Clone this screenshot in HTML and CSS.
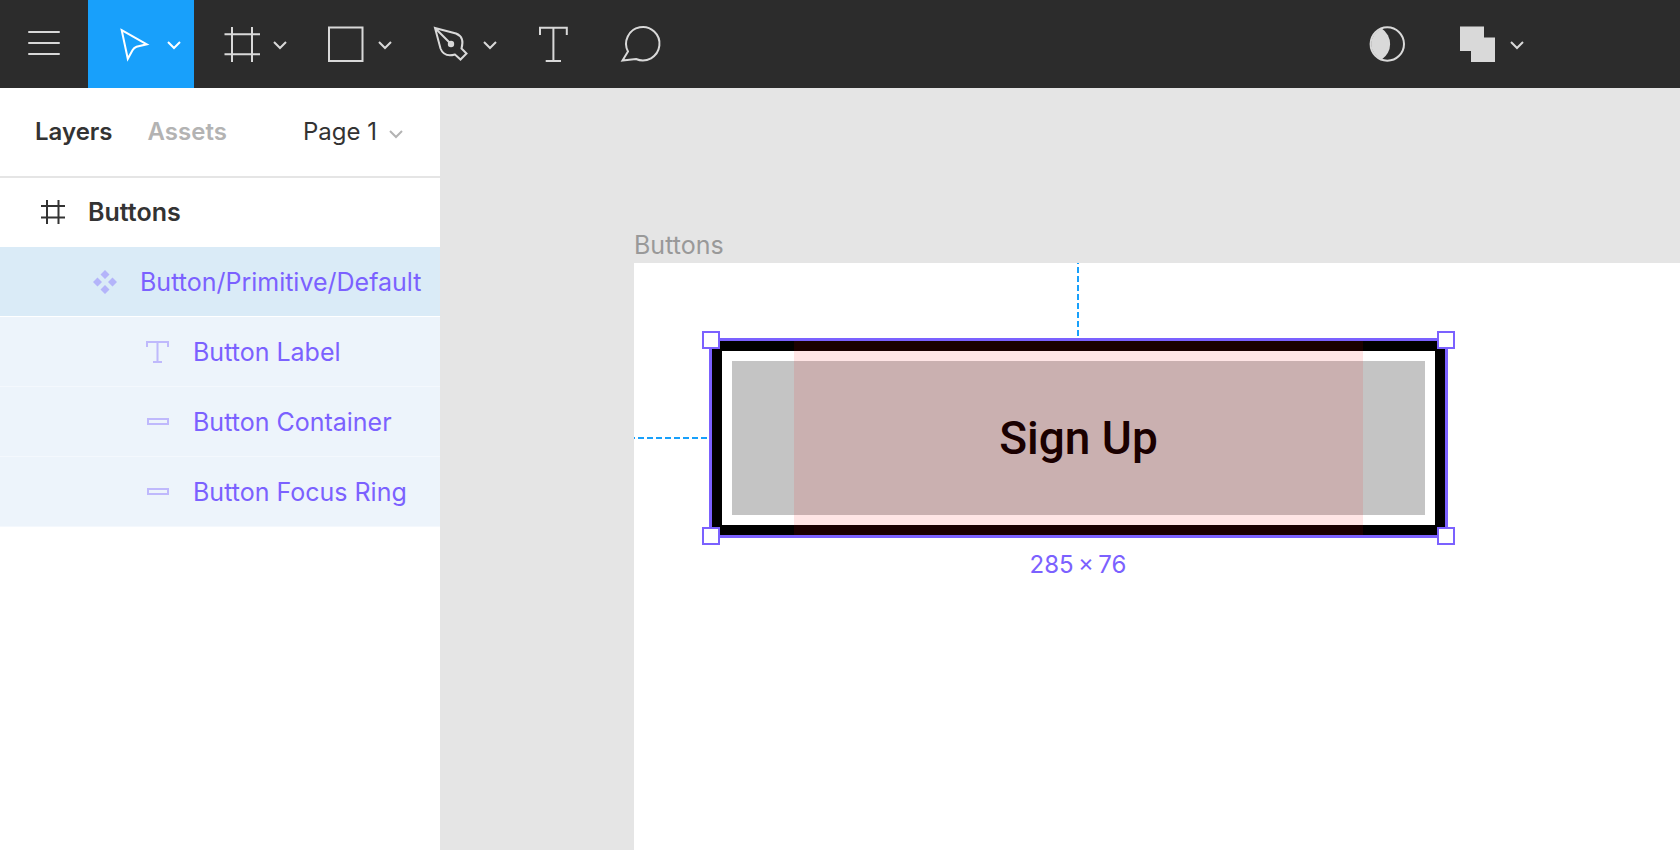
FILE: index.html
```html
<!DOCTYPE html>
<html lang="en">
<head>
    <meta charset="UTF-8">
    <meta name="viewport" content="width=device-width, initial-scale=1.0">
    <title>Buttons</title>
    <link rel="stylesheet" href="styles.css">
</head>
<body>

    <!-- Shared chevron -->
    <svg class="sprite" aria-hidden="true">
        <symbol id="chevron" viewBox="0 0 16 16">
            <path d="M2 6l6 6 6-6"/>
        </symbol>
    </svg>

    <!-- Toolbar -->
    <header class="toolbar">
        <button class="tool" aria-label="Menu">
            <svg class="icon" viewBox="0 0 36 36"><path stroke-linecap="round" d="M3 6h30M3 17h30M3 28h30"/></svg>
        </button>
        <button class="tool tool-menu active" aria-label="Move">
            <svg class="icon" viewBox="0 0 36 36"><path d="M4.7 4.2L29.8 18.3L19.5 20.8C17.5 21.5 16.500 22.500 15.500 24.300L10.8 32.8Z"/></svg>
            <svg class="chevron"><use href="#chevron"/></svg>
        </button>
        <button class="tool tool-menu" aria-label="Frame">
            <svg class="icon" viewBox="0 0 36 36"><path d="M9 1v35M29 1v35M1.5 8.300h35.500M1.5 28.200h35.500"/></svg>
            <svg class="chevron"><use href="#chevron"/></svg>
        </button>
        <button class="tool tool-menu" aria-label="Rectangle">
            <svg class="icon" viewBox="0 0 36 36"><path d="M1 1.5h33.500v33.500H1z"/></svg>
            <svg class="chevron"><use href="#chevron"/></svg>
        </button>
        <button class="tool tool-menu" aria-label="Pen">
            <svg class="icon" viewBox="0 0 36 36">
                <path d="M2 2L23 7.500C28 9.500 31 14 28.500 22.500L33.500 27.500L27.500 33.500L22 28.500C15 30.500 10 29 7.500 22.500ZM2 2l16 16"/>
                <circle class="solid" cx="18" cy="18" r="3.200"/>
            </svg>
            <svg class="chevron"><use href="#chevron"/></svg>
        </button>
        <button class="tool" aria-label="Text">
            <svg class="icon" viewBox="0 0 36 36"><path d="M5 9V1.800h26.800V9M18.400 1.800V35M10.700 35h15.300"/></svg>
        </button>
        <button class="tool" aria-label="Comment">
            <svg class="icon" viewBox="0 0 36 36"><path d="M5 25.500A16.700 16.700 0 1 1 13 33L-.5 34.600Z"/></svg>
        </button>

        <div class="toolbar-right">
            <button class="tool" aria-label="Mask">
                <svg class="icon" viewBox="0 0 36 36">
                    <circle cx="18.300" cy="18" r="16.700"/>
                    <path class="solid" d="M12.700 2.500A18.500 18.500 0 0 1 12.700 33.500A16.700 16.700 0 0 1 12.700 2.500Z"/>
                </svg>
            </button>
            <button class="tool tool-menu" aria-label="Union selection">
                <svg class="icon" viewBox="0 0 36 36"><path class="solid" d="M0 .5h24v11h11v24.500H11V25H0z"/></svg>
                <svg class="chevron"><use href="#chevron"/></svg>
            </button>
        </div>
    </header>

    <div class="workspace">
        <!-- Layers panel -->
        <aside class="panel">
            <div class="panel-header">
                <button class="tab selected">Layers</button>
                <button class="tab">Assets</button>
                <div class="page-picker">
                    <select aria-label="Page">
                        <option>Page 1</option>
                    </select>
                    <svg class="chevron"><use href="#chevron"/></svg>
                </div>
            </div>

            <ul class="layers">
                <li>
                    <button class="layer layer-frame">
                        <svg class="layer-icon" viewBox="0 0 26 26"><path d="M7 1v24M18.500 1v24M1 7h24M1 18.500h24"/></svg>
                        Buttons
                    </button>
                </li>
                <li>
                    <button class="layer component selected">
                        <svg class="layer-icon" viewBox="0 0 26 26"><path class="solid" d="M13 1l4.500 4.500L13 10 8.500 5.500zM13 16l4.500 4.500L13 25l-4.500-4.500zM5.500 8.500L10 13l-4.500 4.500L1 13zM20.500 8.500L25 13l-4.500 4.500L16 13z"/></svg>
                        Button/Primitive/Default
                    </button>
                </li>
                <li>
                    <button class="layer component child">
                        <svg class="layer-icon" viewBox="0 0 26 26"><path d="M2 8V3h21v5M12.500 3v20M8 23h9"/></svg>
                        Button Label
                    </button>
                </li>
                <li>
                    <button class="layer component child">
                        <svg class="layer-icon" viewBox="0 0 26 26"><path d="M3 10h20v5H3z"/></svg>
                        Button Container
                    </button>
                </li>
                <li>
                    <button class="layer component child">
                        <svg class="layer-icon" viewBox="0 0 26 26"><path d="M3 10h20v5H3z"/></svg>
                        Button Focus Ring
                    </button>
                </li>
            </ul>
        </aside>

        <!-- Canvas -->
        <main class="canvas">
            <div class="frame-name">Buttons</div>
            <div class="frame">
                <div class="selection">
                    <button class="sign-up"><span>Sign Up</span></button>
                    <i class="guide guide-top"></i>
                    <i class="guide guide-left"></i>
                    <i class="handle top left"></i>
                    <i class="handle top right"></i>
                    <i class="handle bottom left"></i>
                    <i class="handle bottom right"></i>
                </div>
                <div class="size">285&thinsp;×&thinsp;76</div>
            </div>
        </main>
    </div>

</body>
</html>
```

FILE: styles.css
```css
* {
    box-sizing: border-box;
}

body {
    margin: 0;
    font-family: Inter, sans-serif;
    font-size: 24px;
    line-height: 32px;
    color: #333;
    display: flex;
    flex-direction: column;
    height: 100vh;
    overflow: hidden;
}

button,
select {
    margin: 0;
    padding: 0;
    border: 0;
    background: none;
    font: inherit;
    color: inherit;
}

svg {
    display: block;
    flex: none;
    overflow: visible;
    fill: none;
    stroke: currentColor;
    stroke-width: 2;
}

.solid {
    fill: currentColor;
    stroke: none;
}

.sprite {
    display: none;
}

.icon {
    width: 36px;
    height: 36px;
}

.chevron {
    width: 16px;
    height: 16px;
}

/* Toolbar */
.toolbar {
    display: flex;
    flex: none;
    height: 88px;
    background-color: #2c2c2c;
    color: #d9d9d9;
}

.toolbar-right {
    display: flex;
    margin-left: auto;
    margin-right: 144px;
}

.tool {
    display: flex;
    align-items: center;
    justify-content: center;
    width: 88px;
}

.tool-menu {
    justify-content: flex-start;
    gap: 13px;
    width: 105px;
    padding-left: 29px;
}

.tool.active {
    width: 106px;
    background-color: #18a0fb;
    color: #fff;
}

.workspace {
    display: flex;
    flex: 1;
    min-height: 0;
}

/* Layers panel */
.panel {
    flex: none;
    width: 440px;
    background-color: #fff;
}

.panel-header {
    display: flex;
    align-items: center;
    gap: 35px;
    height: 90px;
    padding: 0 36px 0 35px;
    border-bottom: 2px solid #e5e5e5;
}

.tab {
    font-weight: 600;
    color: #b3b3b3;
}

.tab.selected {
    color: #333;
}

.page-picker {
    display: flex;
    align-items: center;
    gap: 10px;
    margin-left: auto;
}

.page-picker select {
    appearance: none;
}

.page-picker .chevron {
    margin-top: 2px;
    color: #b3b3b3;
}

.layers {
    margin: 0;
    padding: 0;
    list-style: none;
    font-size: 25px;
}

.layer {
    display: flex;
    align-items: center;
    gap: 22px;
    width: 100%;
    height: 70px;
    padding-left: 145px;
    border-bottom: 1px solid #fff;
    text-align: left;
    white-space: nowrap;
}

.layer-icon {
    width: 26px;
    height: 26px;
}

.layer-frame {
    height: 69px;
    padding-left: 40px;
    font-weight: 600;
}

.component {
    color: #7b61ff;
}

.component .layer-icon {
    opacity: 0.4;
}

.layer.selected {
    padding-left: 92px;
    background-color: #daebf7;
}

.child {
    background-color: #edf4fb;
    border-bottom-color: #f4f8fd;
}

/* Canvas */
.canvas {
    display: flex;
    flex: 1;
    flex-direction: column;
    min-width: 0;
    padding: 141px 0 0 194px;
    background-color: #e5e5e5;
}

.frame-name {
    height: 34px;
    font-size: 25px;
    color: #999;
}

.frame {
    flex: 1;
    padding: 75px;
    background-color: #fff;
}

.selection {
    position: relative;
    width: 739px;
    border: 3px solid #7b61ff;
}

/* The component itself: black focus ring, white gap, grey container */
.sign-up {
    display: flex;
    justify-content: center;
    width: 100%;
    height: 194px;
    border: 10px solid #000;
    background: #c4c4c4 padding-box;
    box-shadow: inset 0 0 0 10px #fff;
    font-family: Roboto, sans-serif;
    font-size: 46px;
    font-weight: 500;
    color: #000;
}

/* Red label area runs over the ring */
.sign-up span {
    display: flex;
    align-items: center;
    justify-content: center;
    width: 569px;
    height: 194px;
    margin: -10px 0;
    position: relative;
}

.sign-up span::after {
    content: "";
    position: absolute;
    inset: 0;
    background-color: rgba(255, 0, 0, 0.1);
}

.handle {
    position: absolute;
    width: 18px;
    height: 18px;
    border: 2px solid #7b61ff;
    background-color: #fff;
}

.top {
    top: -10px;
}

.bottom {
    bottom: -10px;
}

.left {
    left: -10px;
}

.right {
    right: -10px;
}

.guide {
    position: absolute;
}

.guide-top {
    right: 50%;
    bottom: 100%;
    width: 2px;
    height: 73px;
    margin-bottom: 5px;
    background: repeating-linear-gradient(to top, #18a0fb 0 6px, transparent 6px 9px);
}

.guide-left {
    bottom: 50%;
    right: 100%;
    width: 73px;
    height: 2px;
    margin: 0 5px -1px 0;
    background: repeating-linear-gradient(to left, #18a0fb 0 6px, transparent 6px 9px);
}

.size {
    width: 738px;
    margin-top: 11px;
    text-align: center;
    color: #7b61ff;
}
```
